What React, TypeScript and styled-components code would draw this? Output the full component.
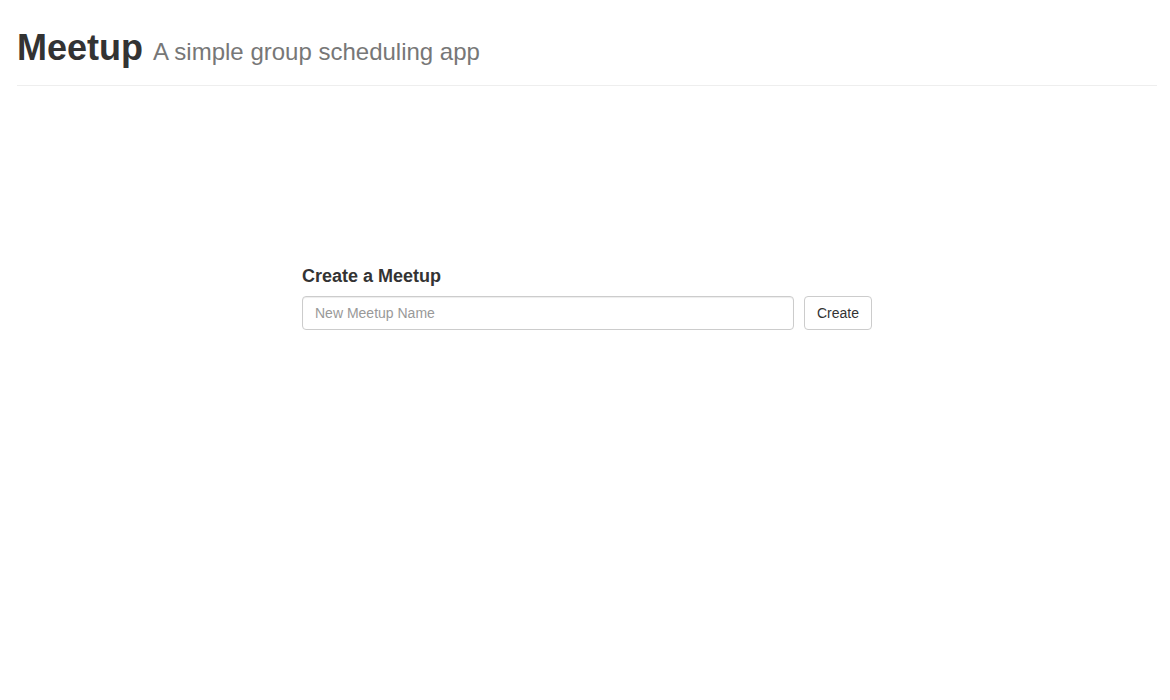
import React from "react";
import styled, { createGlobalStyle } from "styled-components";

const Global = createGlobalStyle`
  html, body { margin: 0; padding: 0; background: #fff; }
  body { font-family: "Liberation Sans", Arial, Helvetica, sans-serif; color: #333; font-size: 14px; }
  * { box-sizing: border-box; }
`;

const Page = styled.div`
  padding: 28px 13px 0 17px;
`;

const Header = styled.header`
  border-bottom: 1px solid #eee;
  padding-bottom: 13px;
`;

const Title = styled.h1`
  margin: 0;
  font-size: 36px;
  line-height: 40px;
  font-weight: 700;
  color: #333;
`;

const Sub = styled.small`
  font-size: 24px;
  color: #777;
  font-weight: 400;
`;

const Main = styled.main`
  display: flex;
  justify-content: center;
  padding-top: 180px;
`;

const Form = styled.form`
  width: 570px;
  display: flex;
  flex-direction: column;
`;

const FormTitle = styled.h3`
  margin: 0 0 10px;
  font-size: 18px;
  line-height: 20px;
  font-weight: 700;
  color: #333;
`;

const Row = styled.div`
  display: flex;
  gap: 10px;
`;

const Input = styled.input`
  flex: 1;
  height: 34px;
  padding: 6px 12px;
  font-family: inherit;
  font-size: 14px;
  color: #555;
  border: 1px solid #ccc;
  border-radius: 4px;
  box-shadow: inset 0 1px 1px rgba(0,0,0,0.075);
  outline: none;
  &::placeholder { color: #999; }
`;

const Button = styled.button`
  height: 34px;
  padding: 6px 12px;
  font-family: inherit;
  font-size: 14px;
  color: #333;
  background: #fff;
  border: 1px solid #ccc;
  border-radius: 4px;
  cursor: pointer;
`;

export default function App() {
  return (
    <>
      <Global />
      <Page>
        <Header>
          <Title>
            Meetup <Sub>A simple group scheduling app</Sub>
          </Title>
        </Header>
        <Main>
          <Form onSubmit={(e) => e.preventDefault()}>
            <FormTitle>Create a Meetup</FormTitle>
            <Row>
              <Input placeholder="New Meetup Name" />
              <Button type="submit">Create</Button>
            </Row>
          </Form>
        </Main>
      </Page>
    </>
  );
}
